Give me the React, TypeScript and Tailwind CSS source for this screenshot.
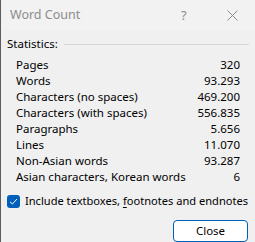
import React from 'react';

const STATS: [string, string][] = [
  ['Pages', '320'],
  ['Words', '93.293'],
  ['Characters (no spaces)', '469.200'],
  ['Characters (with spaces)', '556.835'],
  ['Paragraphs', '5.656'],
  ['Lines', '11.070'],
  ['Non-Asian words', '93.287'],
  ['Asian characters, Korean words', '6'],
];

export default function App() {
  return (
    <div className="w-[255px] h-[242px] bg-[#3a3a3a] overflow-hidden" style={{ fontFamily: '"Segoe UI", "Noto Sans", sans-serif' }}>
      <div className="w-full h-full bg-[#f0f0f0] rounded-tr-[8px] border-l border-l-[#5c5c5c] flex flex-col text-[11.5px] text-black">
        {/* title bar */}
        <div className="h-[30px] flex items-center bg-[#f2f2f2] shrink-0">
          <span className="pl-[9px] text-[#8c8c8c] text-[12.5px] leading-none">Word Count</span>
          <span className="ml-auto w-[10px] text-[#8c8c8c] text-[13px] leading-none mr-[36px]">?</span>
          <svg width="11" height="11" viewBox="0 0 11 11" className="mr-[17px]">
            <path d="M0.5 0.5 L10.5 10.5 M10.5 0.5 L0.5 10.5" stroke="#8c8c8c" strokeWidth="1" fill="none" />
          </svg>
        </div>

        <div className="flex items-center pl-[6px] pr-[6px] h-[26px] pt-[1px]">
          <span className="leading-none">Statistics:</span>
          <div className="flex-1 h-px bg-[#d6d6d6] ml-[6px] mt-[1px]" />
        </div>

        <div className="flex flex-col pl-[15px] pr-[15px] pt-[1px]">
          {STATS.map(([label, value]) => (
            <div key={label} className="h-[16px] flex items-center justify-between leading-none">
              <span>{label}</span>
              <span>{value}</span>
            </div>
          ))}
        </div>

        <div className="flex items-center pl-[6px] mt-[9px] h-[14px]">
          <div className="w-[13px] h-[13px] shrink-0 rounded-[3px] bg-[#005fb8] flex items-center justify-center">
            <svg width="9" height="9" viewBox="0 0 9 9">
              <path d="M1 4.8 L3.4 7 L8 2" stroke="white" strokeWidth="1" fill="none" />
            </svg>
          </div>
          <span className="ml-[5px] leading-none whitespace-nowrap text-[11.1px]">
            Include textboxes, <span className="underline underline-offset-2">f</span>ootnotes and endnotes
          </span>
        </div>

        <div className="flex justify-end pr-[7px] mt-[12px]">
          <button className="w-[75px] h-[22px] bg-white border border-[#005fb8] rounded-[4px] text-[11.5px] leading-none text-black">
            Close
          </button>
        </div>
      </div>
    </div>
  );
}
